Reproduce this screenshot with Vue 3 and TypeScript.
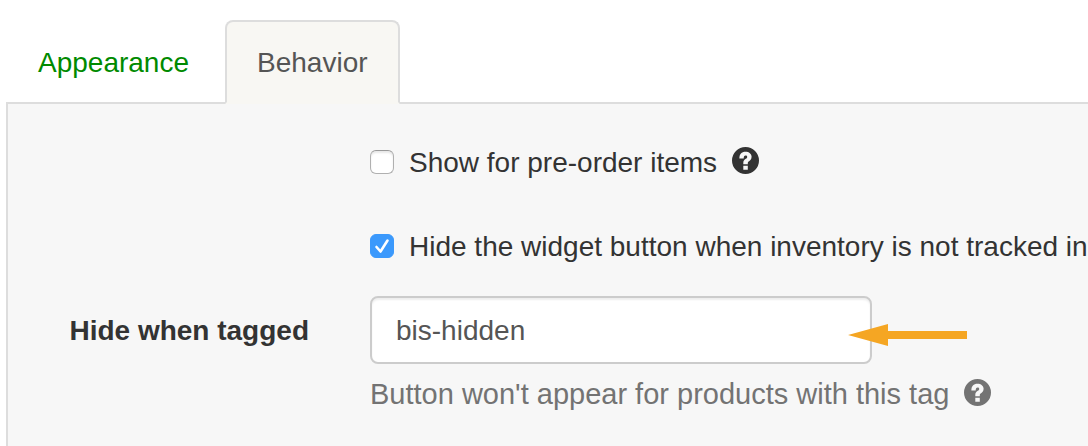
<script setup lang="ts">
import { ref } from 'vue'

interface Tab {
  id: string
  label: string
}

const tabs: Tab[] = [
  { id: 'appearance', label: 'Appearance' },
  { id: 'behavior', label: 'Behavior' },
]
const activeTab = ref('behavior')
const showPreorder = ref(false)
const hideUntracked = ref(true)
const hiddenTag = ref('bis-hidden')

const helpIcon =
  'M27 13.5A13.5 13.5 0 1 1 0 13.5A13.5 13.5 0 1 1 27 13.5Z' +
  'M7.4 11.5C7.4 7 9.5 4.7 13.5 4.7C17 4.7 19.6 6.8 19.6 9.8C19.6 12.4 18 13.5 16.7 14.5C16 15 15.8 15.4 15.8 16.4V17.3H11.3V16C11.3 13.8 12.2 12.8 13.8 11.8C14.8 11.1 15.2 10.8 15.2 9.9C15.2 9 14.5 8.5 13.6 8.5C12.3 8.5 11.7 9.4 11.7 11.5Z' +
  'M11.3 18.7H15.8V22.8H11.3Z'
</script>

<template>
  <main class="settings">
    <nav class="tabs">
      <a
        v-for="tab in tabs"
        :key="tab.id"
        class="tab"
        :class="{ active: tab.id === activeTab }"
        :href="'#' + tab.id"
        @click.prevent="activeTab = tab.id"
      >{{ tab.label }}</a>
    </nav>

    <form class="panel" @submit.prevent>
      <div class="field check-row">
        <input id="preorder" v-model="showPreorder" class="check" type="checkbox" />
        <label for="preorder">Show for pre-order items</label>
        <svg class="help" viewBox="0 0 27 27" aria-hidden="true">
          <path fill-rule="evenodd" :d="helpIcon" />
        </svg>
      </div>

      <div class="field check-row">
        <input id="untracked" v-model="hideUntracked" class="check" type="checkbox" />
        <label for="untracked">Hide the widget button when inventory is not tracked in</label>
      </div>

      <label class="name" for="tag">Hide when tagged</label>
      <div class="field input-wrap">
        <input id="tag" v-model="hiddenTag" class="text" type="text" />
        <svg class="arrow" viewBox="0 0 119 22" aria-hidden="true">
          <path d="M0 11L40 0V7H119V15H40V22Z" />
        </svg>
      </div>

      <p class="field hint">
        <span>Button won't appear for products with this tag</span>
        <svg class="help" viewBox="0 0 27 27" aria-hidden="true">
          <path fill-rule="evenodd" :d="helpIcon" />
        </svg>
      </p>
    </form>
  </main>
</template>

<style>
body {
  margin: 0;
  background: #fff;
}
</style>

<style scoped>
.settings {
  display: flex;
  flex-direction: column;
  min-height: 100vh;
  box-sizing: border-box;
  padding: 20px 0 0 6px;
  overflow: hidden;
  font-family: "Liberation Sans", Arial, sans-serif;
  font-size: 28px;
  line-height: 40px;
  color: #333;
}

.tabs {
  display: flex;
  gap: 4px;
  border-bottom: 2px solid #ddd;
}

.tab {
  margin-bottom: -2px;
  padding: 21px 30px 19px;
  border: 2px solid transparent;
  border-radius: 8px 8px 0 0;
  color: #008a00;
  text-decoration: none;
}

.tab.active {
  border-color: #ddd;
  border-bottom-color: #f8f7f3;
  background: #f8f7f3;
  color: #555;
}

.panel {
  flex: 1;
  display: grid;
  grid-template-columns: 241px minmax(0, 1fr);
  column-gap: 61px;
  align-content: start;
  padding: 38px 0 32px 60px;
  border-left: 2px solid #ddd;
  background: #f7f7f7;
}

.field {
  grid-column: 2;
}

.check-row {
  display: flex;
  align-items: center;
  height: 40px;
  margin-bottom: 44px;
  white-space: nowrap;
}

.check-row + .check-row {
  margin-bottom: 30px;
}

label {
  padding-top: 2px;
}

.check {
  appearance: none;
  flex: none;
  box-sizing: border-box;
  width: 24px;
  height: 24px;
  margin: 0 15px 0 0;
  border: 1px solid #b0b0b0;
  border-top-color: #999;
  border-radius: 6px;
  background: #fff;
  box-shadow: inset 0 2px 2px #e8e8e8;
}

.check:checked {
  border-color: #3b99fc;
  background: #3b99fc url("data:image/svg+xml,%3Csvg xmlns='http://www.w3.org/2000/svg' viewBox='0 0 24 24'%3E%3Cpath d='M6.5 13L10.5 17.5L17.5 6.5' fill='none' stroke='white' stroke-width='2.6' stroke-linecap='round' stroke-linejoin='round'/%3E%3C/svg%3E") center / 24px 24px no-repeat;
  box-shadow: none;
}

.help {
  flex: none;
  width: 27px;
  height: 27px;
  margin: 0 0 4px 15px;
  fill: currentColor;
}

.name {
  grid-column: 1;
  align-self: center;
  font-weight: bold;
  text-align: right;
  white-space: nowrap;
}

.input-wrap {
  position: relative;
  width: 502px;
}

.text {
  display: block;
  box-sizing: border-box;
  width: 100%;
  height: 68px;
  padding: 13px 24px 11px;
  border: 2px solid #ccc;
  border-radius: 8px;
  outline: none;
  background: #fff;
  box-shadow: inset 0 2px 2px #eee;
  color: #555;
  font: inherit;
}

.arrow {
  position: absolute;
  left: 478px;
  top: 28px;
  width: 119px;
  height: 22px;
  fill: #f5a623;
}

.hint {
  display: flex;
  align-items: center;
  margin: 10px 0 0;
  font-size: 29px;
  color: #737373;
  white-space: nowrap;
}
</style>
